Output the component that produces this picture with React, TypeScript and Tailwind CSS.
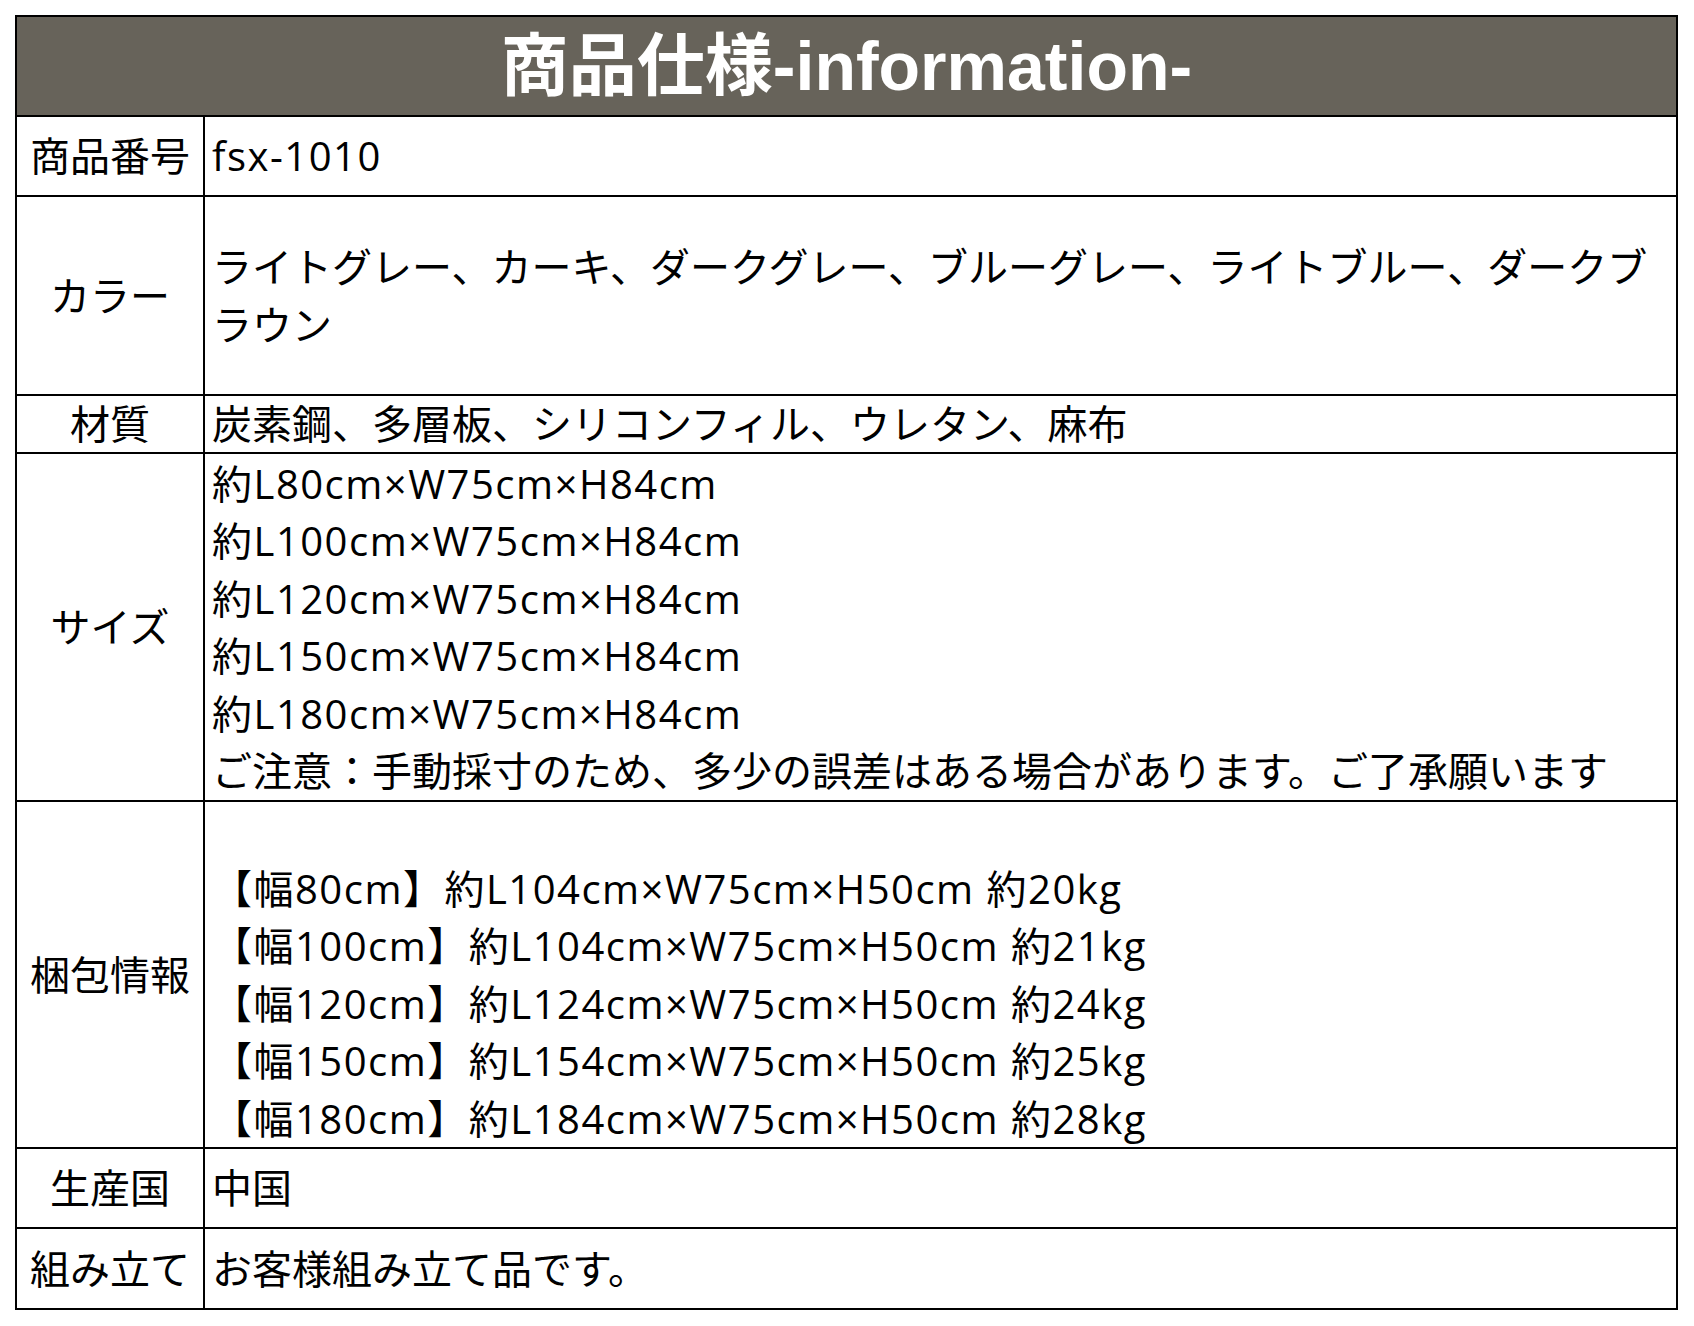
import React from 'react';

type Row = {
  label: string;
  height: string;
  align: string;
  lines: { text: string; latin?: boolean }[];
};

// heights include the 2px top rule (border-box)
const rows: Row[] = [
  { label: '商品番号', height: 'h-[80px]', align: 'justify-center', lines: [{ text: 'fsx-1010', latin: true }] },
  {
    label: 'カラー',
    height: 'h-[199px]',
    align: 'justify-center',
    lines: [
      { text: 'ライトグレー、カーキ、ダークグレー、ブルーグレー、ライトブルー、ダークブ' },
      { text: 'ラウン' },
    ],
  },
  { label: '材質', height: 'h-[58px]', align: 'justify-center', lines: [{ text: '炭素鋼、多層板、シリコンフィル、ウレタン、麻布' }] },
  {
    label: 'サイズ',
    height: 'h-[348px]',
    align: 'justify-center',
    lines: [
      { text: '約L80cm×W75cm×H84cm', latin: true },
      { text: '約L100cm×W75cm×H84cm', latin: true },
      { text: '約L120cm×W75cm×H84cm', latin: true },
      { text: '約L150cm×W75cm×H84cm', latin: true },
      { text: '約L180cm×W75cm×H84cm', latin: true },
      { text: 'ご注意：手動採寸のため、多少の誤差はある場合があります。ご了承願います' },
    ],
  },
  {
    label: '梱包情報',
    height: 'h-[347px]',
    align: 'justify-end',
    lines: [
      { text: '【幅80cm】約L104cm×W75cm×H50cm 約20kg', latin: true },
      { text: '【幅100cm】約L104cm×W75cm×H50cm 約21kg', latin: true },
      { text: '【幅120cm】約L124cm×W75cm×H50cm 約24kg', latin: true },
      { text: '【幅150cm】約L154cm×W75cm×H50cm 約25kg', latin: true },
      { text: '【幅180cm】約L184cm×W75cm×H50cm 約28kg', latin: true },
    ],
  },
  { label: '生産国', height: 'h-[80px]', align: 'justify-center', lines: [{ text: '中国' }] },
  { label: '組み立て', height: 'h-[81px]', align: 'justify-center', lines: [{ text: 'お客様組み立て品です。' }] },
];

export default function App() {
  return (
    <div className="w-[1694px] h-[1326px] bg-white pt-[15px] pl-[15px] text-black font-['Open_Sans','Noto_Sans_CJK_JP',sans-serif]">
      <div className="w-[1663px] border-2 border-black flex flex-col">
        {/* header */}
        <div className="h-[98px] bg-[#67635a] flex items-center justify-center">
          <h1 className="text-[68px] font-bold text-white leading-none font-['Liberation_Sans','Noto_Sans_CJK_JP',sans-serif]">
            商品仕様-information-
          </h1>
        </div>

        {rows.map((row) => (
          <div key={row.label} className={`flex border-t-2 border-black ${row.height}`}>
            <div className="w-[188px] shrink-0 border-r-2 border-black flex items-center justify-center text-[40px] leading-none whitespace-nowrap">
              {row.label}
            </div>
            <div className={`flex-1 flex flex-col pl-[7px] text-[40px] leading-[57.5px] ${row.align}`}>
              {row.lines.map((line, i) => (
                <div key={i} className={`whitespace-nowrap ${line.latin ? 'tracking-[1.5px]' : ''}`}>
                  {line.text}
                </div>
              ))}
            </div>
          </div>
        ))}
      </div>
    </div>
  );
}
